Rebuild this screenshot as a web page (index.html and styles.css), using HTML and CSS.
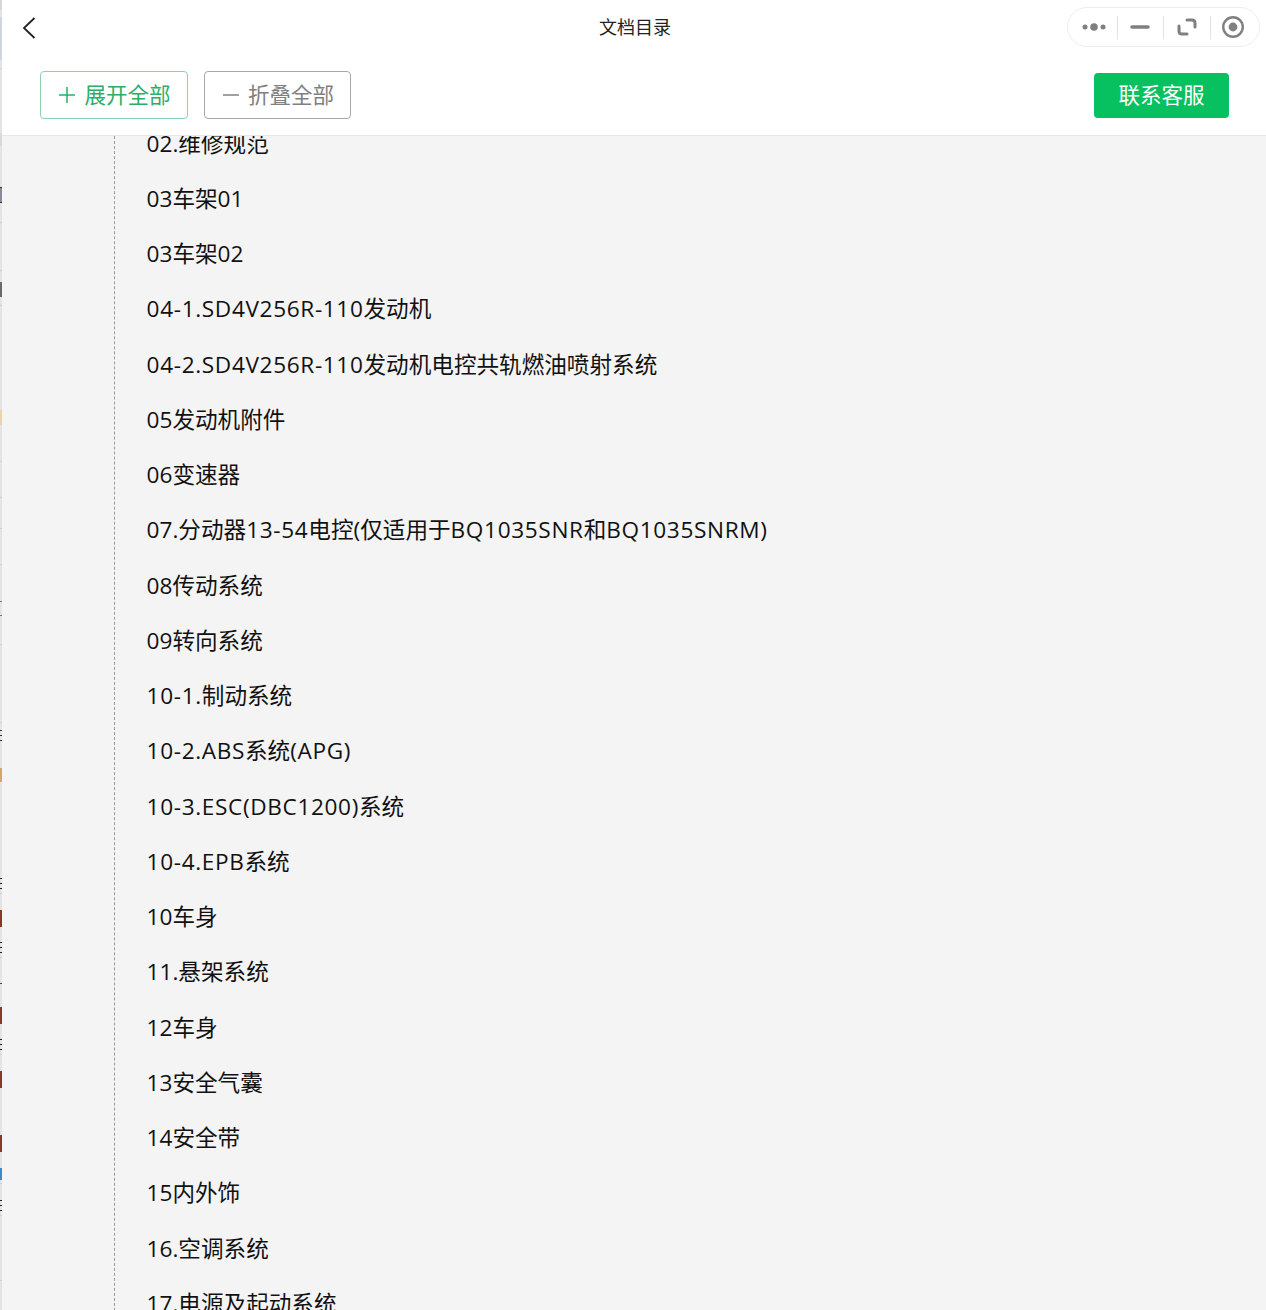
FILE: index.html
```html
<!DOCTYPE html>
<html lang="zh-CN">
<head>
    <meta charset="UTF-8">
    <meta name="viewport" content="width=device-width,initial-scale=1.0" />
    <title>文档目录</title>
    <link rel="stylesheet" href="styles.css">
</head>
<body>
    <div class="window">
        <!-- sliver of the window behind -->
        <svg class="edge" width="2" height="1310" viewBox="0 0 2 1310">
            <rect y="0" width="2" height="10" fill="#d4d6d8"/>
            <rect y="17" width="2" height="43" fill="#cfd5dc"/>
            <rect y="68" width="2" height="1" fill="#cfcfcf"/>
            <rect y="133" width="2" height="13" fill="#d9d9d9"/>
            <rect y="187" width="2" height="16" fill="#8d8899"/>
            <rect y="187" width="2" height="1" fill="#333"/>
            <rect y="202" width="2" height="1" fill="#333"/>
            <rect y="222" width="2" height="1" fill="#cfcfcf"/>
            <rect y="270" width="2" height="1" fill="#cfcfcf"/>
            <rect y="282" width="2" height="15" fill="#6c6870"/>
            <rect y="305" width="2" height="1" fill="#cfcfcf"/>
            <rect y="410" width="2" height="15" fill="#ecd3ae"/>
            <rect y="461" width="2" height="1" fill="#cfcfcf"/>
            <rect y="497" width="2" height="1" fill="#cfcfcf"/>
            <rect y="528" width="2" height="1" fill="#cfcfcf"/>
            <rect y="564" width="2" height="1" fill="#cfcfcf"/>
            <rect y="601" width="2" height="1" fill="#777"/>
            <rect y="615" width="2" height="1" fill="#777"/>
            <rect y="644" width="2" height="1" fill="#cfcfcf"/>
            <rect y="722" width="2" height="1" fill="#cfcfcf"/>
            <rect y="730" width="2" height="1" fill="#333"/>
            <rect y="735" width="2" height="1" fill="#333"/>
            <rect y="740" width="2" height="1" fill="#333"/>
            <rect y="768" width="2" height="14" fill="#d9a566"/>
            <rect y="878" width="2" height="1" fill="#222"/>
            <rect y="883" width="2" height="1" fill="#222"/>
            <rect y="888" width="2" height="1" fill="#222"/>
            <rect y="893" width="2" height="1" fill="#e8c9a0"/>
            <rect y="910" width="2" height="17" fill="#8a3a1c"/>
            <rect y="942" width="2" height="1" fill="#222"/>
            <rect y="947" width="2" height="1" fill="#222"/>
            <rect y="952" width="2" height="1" fill="#222"/>
            <rect y="957" width="2" height="1" fill="#e8c9a0"/>
            <rect y="983" width="2" height="1" fill="#2a4a8a"/>
            <rect y="1007" width="2" height="17" fill="#8a3a1c"/>
            <rect y="1039" width="2" height="1" fill="#222"/>
            <rect y="1044" width="2" height="1" fill="#222"/>
            <rect y="1049" width="2" height="1" fill="#222"/>
            <rect y="1054" width="2" height="1" fill="#e8c9a0"/>
            <rect y="1071" width="2" height="17" fill="#8a3a1c"/>
            <rect y="1135" width="2" height="17" fill="#8a3a1c"/>
            <rect y="1168" width="2" height="12" fill="#3a8ac8"/>
            <rect y="1183" width="2" height="1" fill="#e8c9a0"/>
            <rect y="1200" width="2" height="1" fill="#222"/>
            <rect y="1205" width="2" height="1" fill="#222"/>
            <rect y="1210" width="2" height="1" fill="#222"/>
            <rect y="1215" width="2" height="1" fill="#e8c9a0"/>
            <rect y="1280" width="2" height="1" fill="#d0d0d0"/>
        </svg>
        <div class="page">
            <header class="top">
                <div class="titlebar">
                    <svg class="back" width="14" height="22" viewBox="0 0 14 22"><path d="M12.5 1 L2 11 L12.5 21" fill="none" stroke="#222" stroke-width="1.8"/></svg>
                    <h1 class="title">文档目录</h1>
                    <div class="capsule">
                        <span class="cap-btn">
                            <svg width="24" height="10" viewBox="0 0 24 10"><circle cx="3" cy="5" r="2.5" fill="#808080"/><circle cx="12" cy="5" r="3.8" fill="#808080"/><circle cx="21" cy="5" r="2.5" fill="#808080"/></svg>
                        </span>
                        <span class="cap-btn">
                            <svg width="20" height="6" viewBox="0 0 20 6"><path d="M2 3 H18" stroke="#808080" stroke-width="3.6" stroke-linecap="round"/></svg>
                        </span>
                        <span class="cap-btn">
                            <svg width="20" height="20" viewBox="0 0 20 20"><path d="M10 3 H15 Q18 3 18 6 V10 M10 17 H5 Q2 17 2 14 V9" fill="none" stroke="#808080" stroke-width="3" stroke-linecap="round"/></svg>
                        </span>
                        <span class="cap-btn">
                            <svg width="24" height="24" viewBox="0 0 24 24"><circle cx="12" cy="12" r="9.8" fill="none" stroke="#808080" stroke-width="2.4"/><circle cx="12" cy="12" r="4.4" fill="#808080"/></svg>
                        </span>
                    </div>
                </div>
                <div class="toolbar">
                    <button class="btn btn-open">
                        <svg width="16" height="16" viewBox="0 0 16 16"><path d="M8 0 V16 M0 8 H16" stroke="#2aae67" stroke-width="1.5"/></svg>
                        展开全部
                    </button>
                    <button class="btn btn-fold">
                        <svg width="16" height="16" viewBox="0 0 16 16"><path d="M0 8 H16" stroke="#808080" stroke-width="1.5"/></svg>
                        折叠全部
                    </button>
                    <button class="btn-service">联系客服</button>
                </div>
            </header>
            <main class="content">
                <ul class="tree">
                    <li>02.维修规范</li>
                    <li>03车架01</li>
                    <li>03车架02</li>
                    <li><span class="en">04-1.SD4V256R-110</span>发动机</li>
                    <li><span class="en">04-2.SD4V256R-110</span>发动机电控共轨燃油喷射系统</li>
                    <li>05发动机附件</li>
                    <li>06变速器</li>
                    <li>07.分动器<span class="en">13-54</span>电控(仅适用于<span class="en">BQ1035SNR</span>和<span class="en">BQ1035SNRM)</span></li>
                    <li>08传动系统</li>
                    <li>09转向系统</li>
                    <li><span class="en">10-1.</span>制动系统</li>
                    <li><span class="en">10-2.ABS</span>系统<span class="en">(APG)</span></li>
                    <li><span class="en">10-3.ESC(DBC1200)</span>系统</li>
                    <li><span class="en">10-4.EPB</span>系统</li>
                    <li>10车身</li>
                    <li>11.悬架系统</li>
                    <li>12车身</li>
                    <li>13安全气囊</li>
                    <li>14安全带</li>
                    <li>15内外饰</li>
                    <li>16.空调系统</li>
                    <li>17.电源及起动系统</li>
                </ul>
            </main>
        </div>
    </div>
</body>
</html>
```

FILE: styles.css
```css
html, body {
    margin: 0;
    height: 100%;
    overflow: hidden;
}
body {
    background: #f4f4f4;
    font-family: "Open Sans", "Noto Sans CJK SC", sans-serif;
    color: #111;
}
.window {
    display: flex;
    height: 1310px;
    overflow: hidden;
}
.edge {
    width: 2px;
    flex: none;
    background: #e4e4e4;
}
.page {
    flex: 1;
    min-width: 0;
    display: flex;
    flex-direction: column;
}

.top {
    flex: none;
    height: 135px;
    background: #fff;
    border-bottom: 1px solid #e8e8e8;
}
.titlebar {
    position: relative;
    height: 56px;
    display: flex;
    align-items: center;
    justify-content: space-between;
    padding: 0 6px 0 20px;
}
.back {
    display: block;
}
.title {
    position: absolute;
    left: 0;
    right: 0;
    top: -1px;
    margin: 0;
    padding-left: 2px;
    text-align: center;
    font-size: 18px;
    font-weight: 400;
    line-height: 56px;
    color: #222;
}
.capsule {
    position: relative;
    display: flex;
    align-items: center;
    width: 193px;
    height: 40px;
    margin-bottom: 2px;
    box-sizing: border-box;
    border: 1px solid #eee;
    border-radius: 20px;
    padding: 0 3px 0 3px;
}
.cap-btn {
    flex: 1;
    height: 23px;
    display: flex;
    align-items: center;
    justify-content: center;
    border-left: 1px solid #e2e2e2;
}
.cap-btn:first-child {
    border-left: none;
}

.toolbar {
    display: flex;
    align-items: center;
    height: 48px;
    margin-top: 15px;
    padding: 0 37px 0 38px;
}
.btn {
    display: flex;
    align-items: center;
    justify-content: center;
    gap: 9px;
    height: 48px;
    padding: 0 0 3px 2px;
    background: #fff;
    border-radius: 4px;
    font: inherit;
    font-size: 21.5px;
}
.btn svg {
    margin-top: 3px;
}
.btn-open {
    width: 148px;
    border: 1px solid #88d5ac;
    color: #2aae67;
}
.btn-fold {
    width: 147px;
    margin-left: 16px;
    border: 1px solid #a8a8a8;
    color: #808080;
}
.btn-service {
    width: 135px;
    height: 45px;
    margin-left: auto;
    padding: 0 0 4px;
    border: none;
    border-radius: 4px;
    background: #07c160;
    color: #fff;
    font: inherit;
    font-size: 21.5px;
}

.content {
    flex: 1;
    min-height: 0;
    overflow: hidden;
}
.tree {
    list-style: none;
    margin: -20.4px 0 0 112px;
    padding: 0 0 0 31.6px;
    border-left: 1px dashed #999;
}
.tree li {
    height: 55.25px;
    line-height: 55.25px;
    font-size: 22.6px;
    white-space: nowrap;
}
.en {
    letter-spacing: 0.65px;
}
```
